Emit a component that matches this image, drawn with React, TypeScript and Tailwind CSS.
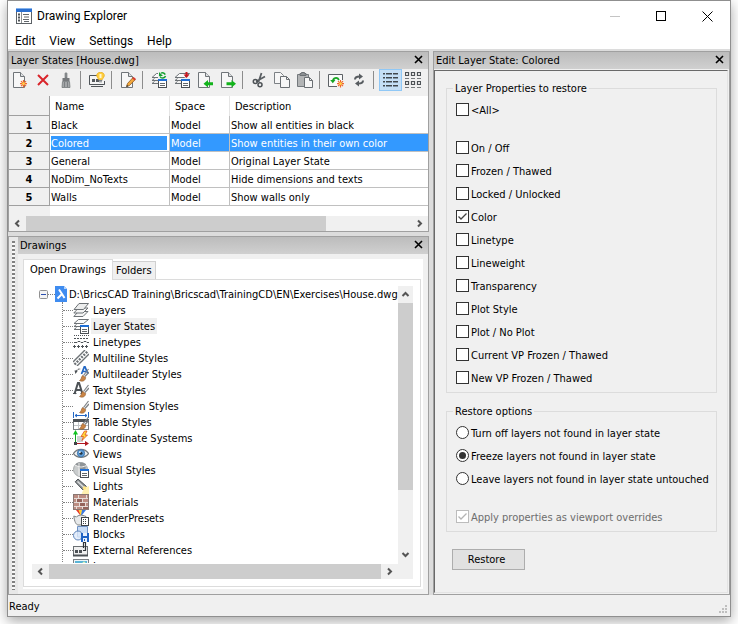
import React, { useState } from 'react';

interface LayerState {
  name: string;
  space: string;
  description: string;
}

interface TreeItem {
  label: string;
  icon: React.ReactNode;
}

const layerStates: LayerState[] = [
  { name: 'Black', space: 'Model', description: 'Show all entities in black' },
  { name: 'Colored', space: 'Model', description: 'Show entities in their own color' },
  { name: 'General', space: 'Model', description: 'Original Layer State' },
  { name: 'NoDim_NoTexts', space: 'Model', description: 'Hide dimensions and texts' },
  { name: 'Walls', space: 'Model', description: 'Show walls only' },
];

const layerProperties = [
  'On / Off',
  'Frozen / Thawed',
  'Locked / Unlocked',
  'Color',
  'Linetype',
  'Lineweight',
  'Transparency',
  'Plot Style',
  'Plot / No Plot',
  'Current VP Frozen / Thawed',
  'New VP Frozen / Thawed',
];

const restoreOptions = [
  'Turn off layers not found in layer state',
  'Freeze layers not found in layer state',
  'Leave layers not found in layer state untouched',
];

const Svg: React.FC<{ children: React.ReactNode; size?: number }> = ({ children, size = 16 }) => (
  <svg width={size} height={size} viewBox={`0 0 ${size} ${size}`} fill="none" className="block shrink-0" aria-hidden="true">
    {children}
  </svg>
);

// Shared pieces of the icons
const Page = () => (
  <>
    <path d="M1.5 .5H8.5L12.5 4.5V15.5H1.5Z" fill="#f7f7f7" stroke="#707579" />
    <path d="M8.5 .5V4.5H12.5" fill="#dde0e2" stroke="#707579" />
  </>
);

const Spark = () => (
  <>
    <path d="M11.5 8V15.4M8 11.7H15M9 9.2L14 14.2M14 9.2L9 14.2" stroke="#f0662a" strokeWidth="1.2" />
    <circle cx="11.5" cy="11.7" r="1.4" fill="#ffd24a" />
  </>
);

const Sheets = () => (
  <>
    <path d="M5.5 1.5H15.5L10.5 5.5H1Z" fill="#fafafa" stroke="#6d7276" />
    <path d="M1 8.5H7M1 11.5H7M1 8.5L3.5 6.5M1 11.5L3.5 9.5" stroke="#6d7276" />
  </>
);

const Props = () => (
  <>
    <rect x="7.5" y="7.5" width="8" height="8" fill="#fff" stroke="#4a4f54" />
    <rect x="7" y="7" width="9" height="2" fill="#1f6fd6" />
    <path d="M9 11.5H14M9 13.5H14" stroke="#62676b" />
  </>
);

const Brush = () => (
  <>
    <path d="M10.5 9.5L15.5 3" stroke="#7c8084" strokeWidth="1.2" />
    <path d="M12 10.5L16 6" stroke="#7c8084" strokeWidth="1.2" />
    <path d="M6.5 14.5C8.5 13.5 8 11.5 9.5 9.5L12.7 11.5C12.5 15 9 16 6.5 14.5Z" fill="#c98445" stroke="#8e5a2b" strokeWidth=".6" />
  </>
);

const AppIcon = () => (
  <Svg>
    <rect x=".5" y=".5" width="15" height="15" fill="#fff" stroke="#5c6166" />
    <rect x="0" y="0" width="16" height="4" fill="#2a6fd0" />
    <rect x="0" y="0" width="16" height="1" fill="#84b2ec" />
    <path d="M2 6.5H4M2 9.5H4M2 12.5H4" stroke="#4e5357" strokeWidth="2" />
    <path d="M5.5 4V15" stroke="#8b8f92" />
    <path d="M7 6.5H13M8 9H13M7 11.5H13M8 13.5H13" stroke="#62676b" />
  </Svg>
);

const NewIcon = () => (
  <Svg>
    <Page />
    <Spark />
  </Svg>
);

const DeleteIcon = () => (
  <Svg>
    <path d="M3 3L13 13M13 3L3 13" stroke="#d9252b" strokeWidth="2" />
  </Svg>
);

const PurgeIcon = () => (
  <Svg>
    <path d="M7 1.5C7 .5 9 .5 9 1.5V6H7Z" fill="#8f9396" stroke="#6d7174" strokeWidth=".6" />
    <path d="M4.5 6H11.5V9H4.5Z" fill="#76797c" />
    <path d="M4.5 9.5L4 15.5H12L11.5 9.5Z" fill="#a3a6a8" stroke="#74787b" strokeWidth=".8" />
    <path d="M6.5 10V15M9.5 10V15" stroke="#7d8184" />
  </Svg>
);

const PreviewIcon = () => (
  <Svg>
    <path d="M8 3.5H.5V12.5H15.5V9" fill="none" stroke="#4f5458" />
    <rect x="1" y="4" width="14" height="8" fill="#f4f4f4" />
    <path d="M.5 12.5H15.5M2 14.5H14" stroke="#4f5458" />
    <path d="M3 7H6V10H3ZM7 7H10V10H7Z" fill="#55595d" />
    <path d="M11.5 .3C14 .3 15.6 2 15.3 4C15 5.6 13.6 6 13.4 7.6H9.6C9.4 6 8 5.6 7.7 4C7.4 2 9 .3 11.5 .3Z" fill="#ffcf3f" stroke="#e6a716" strokeWidth=".7" />
    <path d="M10.5 2.4C11 1.8 12 1.8 12.5 2.4V6H10.5Z" fill="#fff6cf" />
    <path d="M9.8 8.5H13.2M10 9.8H13" stroke="#7e8285" />
  </Svg>
);

const EditIcon = () => (
  <Svg>
    <Page />
    <path d="M6.5 14.5L7.5 11.5L13 5.5L15.3 7.5L9.5 13.5Z" fill="#f3a83c" stroke="#8b5a22" strokeWidth=".8" />
    <path d="M12.2 6.3L13.6 4.9L16 7L14.5 8.4Z" fill="#d93b30" />
    <path d="M6.3 15L7 12.9L8.5 14.3Z" fill="#333" />
  </Svg>
);

const RestoreStateIcon = () => (
  <Svg>
    <Sheets />
    <Props />
    <path d="M7 0H16V7H7Z" fill="#f0f0f0" />
    <path d="M9 4.5A3 3 0 0 0 14.5 4M14.2 2.6A3 3 0 0 0 10 1.2" stroke="#16a032" strokeWidth="1.5" />
    <path d="M8 0V4H12Z" fill="#16a032" />
  </Svg>
);

const SaveStateIcon = () => (
  <Svg>
    <Sheets />
    <Props />
    <path d="M12.5 0V3" stroke="#c9151d" strokeWidth="2" />
    <path d="M9.5 2.5H15.5L12.5 6Z" fill="#c9151d" />
  </Svg>
);

const ImportIcon = () => (
  <Svg>
    <Page />
    <path d="M6.5 11.8L11 8V10.3H16V13.3H11V15.6Z" fill="#12b31b" />
  </Svg>
);

const ExportIcon = () => (
  <Svg>
    <Page />
    <path d="M16 11.8L11.5 8V10.3H6.5V13.3H11.5V15.6Z" fill="#12b31b" />
  </Svg>
);

const CutIcon = () => (
  <Svg>
    <path d="M10.5 1L7.5 10M14 4.5L5 9.5" stroke="#5a5f63" strokeWidth="1.8" />
    <circle cx="4.3" cy="9.5" r="2" stroke="#4d5256" strokeWidth="1.5" />
    <circle cx="9" cy="12.8" r="2" stroke="#4d5256" strokeWidth="1.5" />
  </Svg>
);

const CopyIcon = () => (
  <Svg>
    <path d="M.5 .5H6.5L9.5 3.5V11.5H.5Z" fill="#f7f7f7" stroke="#7c8185" />
    <path d="M6.5 4.5H12.5L15.5 7.5V15.5H6.5Z" fill="#f7f7f7" stroke="#6a6f73" />
    <path d="M12.5 4.5V7.5H15.5" stroke="#6a6f73" />
  </Svg>
);

const PasteIcon = () => (
  <Svg>
    <path d="M.5 2.5H11.5V14.5H.5Z" fill="#b2b4b5" stroke="#74797d" />
    <path d="M3 3.5V1.5H4.5V.5H7.5V1.5H9V3.5Z" fill="#8d9194" stroke="#6a6f73" />
    <path d="M7.5 5.5H12.5L15.5 8.5V15.5H7.5Z" fill="#f7f7f7" stroke="#6a6f73" />
    <path d="M12.5 5.5V8.5H15.5" stroke="#6a6f73" />
  </Svg>
);

const RegenIcon = () => (
  <Svg>
    <path d="M14.5 8V2.5H.5V14.5H9" fill="#fbfbfb" stroke="#5c6165" />
    <path d="M4.8 9.5C4.8 6 9 4.5 11 8" stroke="#17a523" strokeWidth="1.7" />
    <path d="M2.2 8H7.4L4.8 11.2Z" fill="#17a523" />
    <g transform="translate(1 0)">
      <Spark />
    </g>
  </Svg>
);

const RefreshIcon = () => (
  <Svg>
    <path d="M4 7.5C4 5 5.5 4.5 8.5 4.5" stroke="#575c60" strokeWidth="2" />
    <path d="M8 1.5L12 4.5L8 7.5Z" fill="#575c60" />
    <path d="M12 8.5C12 11 10.5 11.5 7.5 11.5" stroke="#575c60" strokeWidth="2" />
    <path d="M8 8.5L4 11.5L8 14.5Z" fill="#575c60" />
  </Svg>
);

const DetailsIcon = () => (
  <Svg>
    <path d="M1 2H3M1 6H3M1 10H3M1 14H3M4 2H10M4 6H10M4 10H10M4 14H10M11 2H16M11 6H16M11 10H16M11 14H16" stroke="#8195a6" strokeWidth="2" />
    <path d="M1 1.5H3M1 5.5H3M1 9.5H3M1 13.5H3M4 1.5H10M4 5.5H10M4 9.5H10M4 13.5H10M11 1.5H16M11 5.5H16M11 9.5H16M11 13.5H16" stroke="#42474b" />
  </Svg>
);

const TilesIcon = () => (
  <Svg>
    <path d="M.5 .5H3.5V3.5H.5ZM6.5 .5H9.5V3.5H6.5ZM12.5 .5H15.5V3.5H12.5ZM.5 9.5H3.5V12.5H.5ZM6.5 9.5H9.5V12.5H6.5ZM12.5 9.5H15.5V12.5H12.5Z" stroke="#4d5256" strokeWidth="1.2" />
    <path d="M0 6.5H4M6 6.5H10M12 6.5H16M0 15.5H4M6 15.5H10M12 15.5H16" stroke="#777b7e" />
  </Svg>
);

const treeItems: TreeItem[] = [
  {
    label: 'Layers',
    icon: (
      <Svg>
        <path d="M5.5 9.5H15L10 14.5H.8Z" fill="#f4f4f4" stroke="#6d7276" />
        <path d="M5.5 6H15L10 11H.8Z" fill="#f4f4f4" stroke="#6d7276" />
        <path d="M6 1.5H15.5L10.5 7.5H1Z" fill="#eceded" stroke="#6d7276" />
      </Svg>
    ),
  },
  {
    label: 'Layer States',
    icon: (
      <Svg>
        <Sheets />
        <Props />
      </Svg>
    ),
  },
  {
    label: 'Linetypes',
    icon: (
      <Svg>
        <path d="M1 1.5H16" stroke="#4d5256" strokeDasharray="1 1" />
        <path d="M1 4.5H16" stroke="#4d5256" strokeDasharray="2 1" />
        <path d="M1 8.5H4L5 7.5H7L8 8.5H10L11 7.5H13L14 8.5H16" stroke="#4d5256" />
        <path d="M1 12.5H16" stroke="#4d5256" strokeWidth="3" strokeDasharray="1 3" />
        <path d="M0 12.5H16" stroke="#4d5256" strokeDasharray="3 1" />
      </Svg>
    ),
  },
  {
    label: 'Multiline Styles',
    icon: (
      <Svg>
        <path d="M0 12L12 0M4 16L16 4" stroke="#6d7276" strokeWidth="1.4" />
        <path d="M1.5 14.5L15 1" stroke="#6d7276" strokeWidth="2.4" strokeDasharray="2 1.2" />
      </Svg>
    ),
  },
  {
    label: 'Multileader Styles',
    icon: (
      <Svg>
        <path d="M3 5.5C3.5 3 5.5 3 8 3" stroke="#4d5256" strokeDasharray="2 1" />
        <path d="M1.5 4.5H5L2.5 8Z" fill="#4d5256" />
        <path d="M8.5 8L11.3 .8H12L15 8M9.7 5.5H13.7" stroke="#2367c4" strokeWidth="1.7" />
        <Brush />
      </Svg>
    ),
  },
  {
    label: 'Text Styles',
    icon: (
      <Svg>
        <path d="M1.5 12L5 .8H6L9.5 12M3 8H8.3" stroke="#4d5256" strokeWidth="2" />
        <path d="M0 11.5H3.5M7.5 11.5H11" stroke="#4d5256" />
        <Brush />
      </Svg>
    ),
  },
  {
    label: 'Dimension Styles',
    icon: (
      <Svg>
        <Brush />
        <path d="M.5 14V16M15.5 14V16" stroke="#2367c4" />
      </Svg>
    ),
  },
  {
    label: 'Table Styles',
    icon: (
      <Svg>
        <path d="M.5 0V4M15.5 0V4M2 1.5H14M4 0L2 1.5L4 3M12 0L14 1.5L12 3" stroke="#2367c4" />
        <rect x=".5" y="5.5" width="15" height="10" fill="#fff" stroke="#7b8084" />
        <rect x="0" y="5" width="16" height="3" fill="#4d5256" />
        <path d="M1 11.5H15M5.5 8V15M10.5 8V15" stroke="#c3c6c8" />
        <Brush />
      </Svg>
    ),
  },
  {
    label: 'Coordinate Systems',
    icon: (
      <Svg>
        <rect x="4" y="6" width="6" height="6" fill="#cfd2d4" />
        <path d="M2.5 13V3" stroke="#12a322" />
        <path d="M0 4.5L2.5 0L5 4.5Z" fill="#12c322" />
        <path d="M3 13.5H13" stroke="#b01820" />
        <path d="M12 11L16 13.5L12 16Z" fill="#b01820" />
        <rect x="1" y="12" width="3" height="3" fill="#3f4448" />
        <path d="M11.5 1L8 6.5H10.5L9 10.5L14.5 5H12L14 1Z" fill="#ffd93b" stroke="#e0511c" strokeWidth=".8" />
      </Svg>
    ),
  },
  {
    label: 'Views',
    icon: (
      <Svg>
        <path d="M.5 7.5C4 2 12 2 15.5 7.5C12 12.5 4 12.5 .5 7.5Z" fill="#f4f4f4" stroke="#74797d" strokeWidth="1.3" />
        <circle cx="8" cy="7.3" r="3.7" fill="#5b9bd8" stroke="#3f6f9e" strokeWidth=".8" />
        <circle cx="8" cy="7.3" r="1.5" fill="#243544" />
        <circle cx="6.9" cy="6.1" r=".9" fill="#fff" />
      </Svg>
    ),
  },
  {
    label: 'Visual Styles',
    icon: (
      <Svg>
        <circle cx="7.5" cy="7.5" r="7" fill="#c9cccd" stroke="#a4a8aa" />
        <path d="M2 2.5C6 4 8 7 8 14.5L12 12L13 2C9 0 5 0 2 2.5Z" fill="#909598" />
        <path d="M2 3C6 5 8 6 13.5 3.5" stroke="#f3f3f3" />
        <path d="M6 1V14" stroke="#eee" />
        <Props />
      </Svg>
    ),
  },
  {
    label: 'Lights',
    icon: (
      <Svg>
        <path d="M11 10.5L16 8V16H8.5Z" fill="#fff0b0" />
        <path d="M2.2 3.8L5 1L13.3 8.3L9.8 11.8Z" fill="#8b9093" stroke="#4d5256" />
        <path d="M4.5 3.5L11 9.5" stroke="#dcdedf" strokeWidth="1.4" />
        <circle cx="11.5" cy="10" r="1.8" fill="#ffe482" />
      </Svg>
    ),
  },
  {
    label: 'Materials',
    icon: (
      <Svg>
        <rect x=".5" y=".5" width="15" height="15" fill="#e6dcd8" stroke="#8a7772" />
        <path d="M1 1H5V4H1ZM6 1H13V4H6ZM14 1H15V4H14ZM1 5H3V8H1ZM10 5H15V8H10ZM1 9H6V12H1ZM13 9H15V12H13ZM1 13H3V15H1ZM4 13H9V15H4Z" fill="#bd8d82" />
        <path d="M4 5H9V8H4ZM7 9H12V12H7ZM10 13H15V15H10Z" fill="#95645b" />
      </Svg>
    ),
  },
  {
    label: 'RenderPresets',
    icon: (
      <Svg>
        <path d="M3 0H6L8 5H7Z" fill="#e5362b" />
        <path d="M5.5 0H9L8.5 5H7.5Z" fill="#ffd233" />
        <path d="M9 0H13L9 5H8Z" fill="#3a78e0" />
        <path d="M.8 6C1.5 12 3 14.5 5 15H11C14 13 14.5 9 13 6.5C9 4.5 5 5 3.5 7Z" fill="#e7e9ea" stroke="#7d8285" />
        <rect x="8.5" y="7.5" width="7" height="8" fill="#fff" stroke="#3f4448" />
        <path d="M10 9.5H14M10 11.5H14M10 13.5H14" stroke="#3f4448" strokeDasharray="1 1" />
      </Svg>
    ),
  },
  {
    label: 'Blocks',
    icon: (
      <Svg>
        <path d="M4.5 .5H14.5V11H4.5Z" fill="#c8dcf6" stroke="#6f92c4" />
        <circle cx="5" cy="9.5" r="4.5" fill="#dfeafa" fillOpacity=".8" stroke="#5f84ba" />
        <rect x="8" y="7" width="8" height="9" fill="#1f62c4" />
        <rect x="10" y="7" width="4" height="3" fill="#e9f1fc" />
        <rect x="10" y="12" width="4" height="4" fill="#e9f1fc" />
        <rect x="11" y="13" width="1" height="2" fill="#1f62c4" />
      </Svg>
    ),
  },
  {
    label: 'External References',
    icon: (
      <Svg>
        <rect x=".5" y="4.5" width="14" height="9" fill="#f0f0f0" stroke="#6a6f73" />
        <path d="M0 13.5H15" stroke="#4d5256" strokeWidth="2" />
        <path d="M2 8H5V11H2ZM6 8H9V11H6Z" fill="#4d5256" />
        <path d="M10 8.5H12.5V.5H10.5V6" stroke="#2f3438" strokeWidth="1.2" />
      </Svg>
    ),
  },
  {
    label: 'Images',
    icon: (
      <Svg>
        <rect x=".5" y="1.5" width="15" height="12" fill="#eef5f8" stroke="#7b8084" />
        <rect x="2" y="3" width="12" height="9" fill="#59b4d6" />
        <circle cx="11" cy="5" r="1.5" fill="#d9f2c0" />
      </Svg>
    ),
  },
];

const toolbarGroups: { label: string; icon: React.ReactNode; active?: boolean }[][] = [
  [
    { label: 'New', icon: <NewIcon /> },
    { label: 'Delete', icon: <DeleteIcon /> },
    { label: 'Purge', icon: <PurgeIcon /> },
  ],
  [{ label: 'Preview', icon: <PreviewIcon /> }],
  [{ label: 'Edit', icon: <EditIcon /> }],
  [
    { label: 'Restore state', icon: <RestoreStateIcon /> },
    { label: 'Save state', icon: <SaveStateIcon /> },
    { label: 'Import', icon: <ImportIcon /> },
    { label: 'Export', icon: <ExportIcon /> },
  ],
  [
    { label: 'Cut', icon: <CutIcon /> },
    { label: 'Copy', icon: <CopyIcon /> },
    { label: 'Paste', icon: <PasteIcon /> },
  ],
  [
    { label: 'Regenerate', icon: <RegenIcon /> },
    { label: 'Refresh', icon: <RefreshIcon /> },
  ],
  [
    { label: 'Details view', icon: <DetailsIcon />, active: true },
    { label: 'Icon view', icon: <TilesIcon /> },
  ],
];

const Chevron: React.FC<{ dir: 'left' | 'right' | 'up' | 'down' }> = ({ dir }) => {
  const paths = {
    left: 'M6 1.5L3 4.5L6 7.5',
    right: 'M3 1.5L6 4.5L3 7.5',
    up: 'M1.5 6L4.5 3L7.5 6',
    down: 'M1.5 3L4.5 6L7.5 3',
  };
  return (
    <Svg size={9}>
      <path d={paths[dir]} stroke="#555" strokeWidth="2" />
    </Svg>
  );
};

const HScroll: React.FC<{ thumb: string }> = ({ thumb }) => (
  <div className="flex h-[15px] bg-[#f0f0f0]">
    <button aria-label="Scroll left" className="flex w-[17px] items-center justify-center">
      <Chevron dir="left" />
    </button>
    <div className="flex-1">
      <div className={`h-full bg-[#cdcdcd] ${thumb}`} />
    </div>
    <button aria-label="Scroll right" className="flex w-[17px] items-center justify-center">
      <Chevron dir="right" />
    </button>
  </div>
);

const PanelHeader: React.FC<{ title: string }> = ({ title }) => (
  <div className="flex h-[17px] items-center justify-between bg-linear-to-b from-[#bcbcbc] to-[#d0d0d0] pr-[5px] pl-[2px]">
    <h2>{title}</h2>
    <button aria-label={`Close ${title}`} className="pb-[2px]">
      <Svg size={9}>
        <path d="M1 1L8 8M8 1L1 8" stroke="#000" strokeWidth="1.6" />
      </Svg>
    </button>
  </div>
);

interface CheckProps {
  label: string;
  checked: boolean;
  disabled?: boolean;
  onChange?: () => void;
}

const Check: React.FC<CheckProps> = ({ label, checked, disabled, onChange }) => (
  <label className={`flex h-[23px] items-center gap-[2px] ${disabled ? 'text-[#6d6d6d]' : ''}`}>
    <span className="grid">
      <input
        type="checkbox"
        checked={checked}
        disabled={disabled}
        onChange={onChange}
        className="size-[13px] appearance-none border border-[#333] bg-white [grid-area:1/1] disabled:border-[#bcbcbc]"
      />
      {checked && (
        <span className="pointer-events-none [grid-area:1/1]">
          <Svg size={13}>
            <path d="M2.5 6.5L5 9L10.5 3.5" stroke={disabled ? '#b4b4b4' : '#444'} strokeWidth="1.3" />
          </Svg>
        </span>
      )}
    </span>
    <span className="pt-[2px]">{label}</span>
  </label>
);

const GroupBox: React.FC<{ title: string; children: React.ReactNode }> = ({ title, children }) => (
  <fieldset className="border border-[#dcdcdc] pl-[9px]">
    <legend className="-ml-[3px] px-[2px] pt-[2px] leading-[14px]">{title}</legend>
    {children}
  </fieldset>
);

const LayerStatesPanel = () => {
  const [selected, setSelected] = useState(1);

  return (
    <section className="border border-[#a0a0a0] bg-[#f0f0f0]">
      <PanelHeader title="Layer States [House.dwg]" />
      <div className="flex h-[27px] items-start">
        {toolbarGroups.map((group, i) => (
          <React.Fragment key={i}>
            {i > 0 && (
              <div className="flex h-[22px] w-2 items-center pl-[2px]">
                <div className="h-[18px] w-px bg-[#8c8c8c]" />
              </div>
            )}
            {group.map((tool) => (
              <button
                key={tool.label}
                aria-label={tool.label}
                className={`flex h-[22px] w-[23px] items-center border pl-[2px] ${tool.active ? 'border-[#90c8f6] bg-[#c5dff5]' : 'border-transparent'}`}
              >
                {tool.icon}
              </button>
            ))}
          </React.Fragment>
        ))}
      </div>
      <table className="w-full table-fixed border-separate border-spacing-0 bg-white text-left leading-[14px]">
        <colgroup>
          <col className="w-[41px]" />
          <col className="w-[120px]" />
          <col className="w-[60px]" />
          <col />
        </colgroup>
        <thead>
          <tr className="h-5">
            <th className="border-r border-b border-[#a0a0a0] bg-[#f0f0f0]" />
            <th className="border-r border-[#e5e5e5] pt-[2px] pl-[5px] font-normal">Name</th>
            <th className="border-r border-[#e5e5e5] pt-[2px] pl-[5px] font-normal">Space</th>
            <th className="pt-[2px] pl-[5px] font-normal">Description</th>
          </tr>
        </thead>
        <tbody>
          {layerStates.map((row, i) => {
            const active = i === selected;
            const cell = `border-b border-[#c0c0c0] p-0 pt-[3px] pl-px ${active ? 'bg-[#3399ff] text-white' : ''}`;
            return (
              <tr key={row.name} className="h-[18px]" onClick={() => setSelected(i)}>
                <th className="border-r border-b border-[#a0a0a0] bg-[#f0f0f0] p-0 pt-[3px] text-center font-bold">{i + 1}</th>
                <td className={`border-r border-b border-[#c0c0c0] ${active ? 'pt-[2px] pr-[2px] pb-px pl-px text-white' : 'p-0 pt-[3px] pl-px'}`}>
                  <div className={active ? 'bg-[#3399ff] pt-[2px] leading-[12px]' : ''}>{row.name}</div>
                </td>
                <td className={`border-r ${cell}`}>{row.space}</td>
                <td className={cell}>{row.description}</td>
              </tr>
            );
          })}
        </tbody>
      </table>
      <div className="h-[10px] bg-white">
        <div className="h-full w-[41px] bg-[#f0f0f0]" />
      </div>
      <HScroll thumb="w-[78%]" />
    </section>
  );
};

const DrawingsPanel = () => {
  const [tab, setTab] = useState('Open Drawings');
  const [current, setCurrent] = useState('Layer States');

  return (
    <section className="flex border border-[#a0a0a0] bg-[#f0f0f0]">
      <div className="flex w-[9px] justify-center bg-[#e8e8e8] py-1">
        <div className="w-[3px] bg-[repeating-linear-gradient(to_bottom,#808080_0px,#808080_2px,#f8f8f8_2px,#f8f8f8_4px)]" />
      </div>
      <div className="min-w-0 flex-1">
        <PanelHeader title="Drawings" />
        <div className="p-[5px]">
          <div className="bg-white pr-[2px] pb-[2px]">
            <div className="flex items-end">
              {['Open Drawings', 'Folders'].map((name) => (
                <button
                  key={name}
                  onClick={() => setTab(name)}
                  className={
                    name === tab
                      ? '-mb-px h-[21px] border border-b-0 border-[#dcdcdc] bg-white px-[6px]'
                      : 'h-[18px] border border-b-0 border-l-0 border-[#d0d0d0] bg-[#f0f0f0] px-[3px]'
                  }
                >
                  {name}
                </button>
              ))}
            </div>
            <div className="border border-[#dcdcdc] pt-[6px] pr-[7px] pb-[7px] pl-2">
              <div className="flex">
                <div className="min-w-0 flex-1">
                  <div className="mb-px h-[277px] overflow-hidden leading-[14px] whitespace-nowrap">
                    <div className="flex h-4 items-center pl-[7px]">
                      <Svg size={9}>
                        <rect x=".5" y=".5" width="8" height="8" rx="1" fill="#f4f4f4" stroke="#919191" />
                        <path d="M2 4.5H7" stroke="#2a4fb0" />
                      </Svg>
                      <span className="w-[7px] shrink-0 border-t border-dotted border-[#808080]" />
                      <svg width="12" height="16" viewBox="0 0 12 16" className="shrink-0" aria-hidden="true">
                        <path d="M0 0H9L12 3V16H0Z" fill="#3f8cf0" />
                        <path d="M9 0V3H12Z" fill="#b7d5fb" />
                        <path d="M4 3.5L7 8L9.5 12M6.5 8.5L2.5 12.5" stroke="#fff" strokeWidth="2" fill="none" />
                      </svg>
                      <span className="pt-[2px] pl-[2px]">D:\BricsCAD Training\Bricscad\TrainingCD\EN\Exercises\House.dwg</span>
                    </div>
                    <ul className="ml-[30px] border-l border-dotted border-[#808080]">
                      {treeItems.map((item) => (
                        <li key={item.label} className="flex h-4 items-center">
                          <span className="w-[10px] border-t border-dotted border-[#808080]" />
                          {item.icon}
                          <button
                            onClick={() => setCurrent(item.label)}
                            className={`ml-[2px] h-4 px-[2px] pt-[2px] ${item.label === current ? 'bg-[#f0f0f0]' : ''}`}
                          >
                            {item.label}
                          </button>
                        </li>
                      ))}
                    </ul>
                  </div>
                  <HScroll thumb="w-full" />
                </div>
                <div className="flex w-[15px] flex-col bg-[#f0f0f0] pb-4">
                  <button aria-label="Scroll up" className="flex h-[17px] items-center justify-center">
                    <Chevron dir="up" />
                  </button>
                  <div className="flex-1">
                    <div className="h-[77%] bg-[#cdcdcd]" />
                  </div>
                  <button aria-label="Scroll down" className="flex h-[17px] items-center justify-center">
                    <Chevron dir="down" />
                  </button>
                </div>
              </div>
            </div>
          </div>
        </div>
      </div>
    </section>
  );
};

const EditPanel = () => {
  const [checked, setChecked] = useState<string[]>(['Color']);
  const [option, setOption] = useState(1);

  const toggle = (name: string) =>
    setChecked(checked.includes(name) ? checked.filter((c) => c !== name) : [...checked, name]);

  const allChecked = checked.length === layerProperties.length;

  return (
    <section className="flex min-w-0 flex-1 flex-col border border-[#a0a0a0] bg-[#f0f0f0]">
      <PanelHeader title="Edit Layer State: Colored" />
      <div className="mt-px mr-px mb-px flex-1 border border-t-[#696969] border-r-[#e3e3e3] border-b-[#e3e3e3] border-l-[#696969] pt-[9px] pr-[10px] pl-[11px]">
        <GroupBox title="Layer Properties to restore">
          <div className="pt-[2px] pb-[15px]">
            <Check label="<All>" checked={allChecked} onChange={() => setChecked(allChecked ? [] : layerProperties)} />
          </div>
          <div className="pb-[3px]">
            {layerProperties.map((name) => (
              <Check key={name} label={name} checked={checked.includes(name)} onChange={() => toggle(name)} />
            ))}
          </div>
        </GroupBox>
        <div className="pt-[10px]">
          <GroupBox title="Restore options">
            <div className="pt-[2px]">
              {restoreOptions.map((name, i) => (
                <label key={name} className="flex h-[23px] items-center gap-[2px]">
                  <span className="grid place-items-center">
                    <input
                      type="radio"
                      name="restore"
                      checked={option === i}
                      onChange={() => setOption(i)}
                      className="size-[13px] appearance-none rounded-full border border-[#333] bg-white [grid-area:1/1]"
                    />
                    {option === i && (
                      <span className="pointer-events-none size-[7px] rounded-full bg-[#333] [grid-area:1/1]" />
                    )}
                  </span>
                  <span className="pt-[2px]">{name}</span>
                </label>
              ))}
            </div>
            <div className="pt-[15px] pb-[3px]">
              <Check label="Apply properties as viewport overrides" checked disabled />
            </div>
          </GroupBox>
        </div>
        <button className="mt-[17px] ml-[6px] h-[21px] w-[73px] border border-[#adadad] bg-[#e1e1e1] pt-px pr-1">Restore</button>
      </div>
    </section>
  );
};

const App: React.FC = () => {
  return (
    <div className="min-h-screen bg-white pr-[7px] pb-[7px] pl-[7px] font-['DejaVu_Sans_Condensed','DejaVu_Sans',sans-serif] text-[11px] leading-[16px] text-black">
      <div className="border border-[#8f8f8f] bg-[#f0f0f0] shadow-[0_4px_12px_rgba(0,0,0,0.35)]">
        <div className="bg-white font-['Roboto','Noto_Sans',sans-serif] text-[12px]">
          <header className="flex h-[30px] items-center pl-2">
            <AppIcon />
            <h1 className="flex-1 pl-[5px]">Drawing Explorer</h1>
            <button aria-label="Minimize" className="flex w-[46px] justify-center">
              <Svg size={11}>
                <path d="M0 5.5H10" stroke="#c4c4c4" />
              </Svg>
            </button>
            <button aria-label="Maximize" className="flex w-[46px] justify-center">
              <Svg size={11}>
                <rect x=".5" y=".5" width="9" height="9" stroke="#000" />
              </Svg>
            </button>
            <button aria-label="Close" className="flex w-[46px] justify-center">
              <Svg size={11}>
                <path d="M.5 .5L10.5 10.5M10.5 .5L.5 10.5" stroke="#000" />
              </Svg>
            </button>
          </header>
          <nav className="flex h-[18px] items-center gap-[14px] pt-[2px] pl-[7px]">
            <button>Edit</button>
            <button>View</button>
            <button>Settings</button>
            <button>Help</button>
          </nav>
        </div>
        <main className="flex gap-1 bg-[#dcdcdc] pt-[2px]">
          <div className="flex w-[421px] shrink-0 flex-col gap-1">
            <LayerStatesPanel />
            <DrawingsPanel />
          </div>
          <EditPanel />
        </main>
        <footer className="flex h-[21px] items-center justify-between pl-px">
          <span className="pt-[3px]">Ready</span>
          <span className="self-end p-[2px]">
            <Svg size={9}>
              <path d="M6 0H8V2H6ZM3 3H5V5H3ZM6 3H8V5H6ZM0 6H2V8H0ZM3 6H5V8H3ZM6 6H8V8H6Z" fill="#bfbfbf" />
            </Svg>
          </span>
        </footer>
      </div>
    </div>
  );
};

export default App;
